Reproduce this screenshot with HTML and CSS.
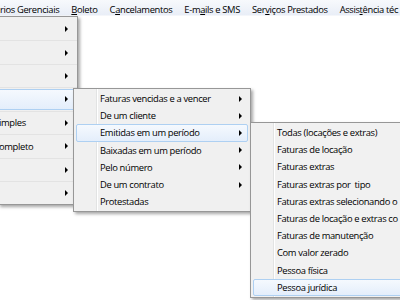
FILE: index.html
```html
<!DOCTYPE html>
<html>
<head>
<meta charset="utf-8">
<link rel="stylesheet" href="styles.css">
</head>
<body>
<div class="screen">
  <div class="menubar">
    <span class="mb-item">rios Gerenciais</span>
    <span class="mb-item"><u>B</u>oleto</span>
    <span class="mb-item">C<u>a</u>ncelamentos</span>
    <span class="mb-item">E-m<u>a</u>ils e SMS</span>
    <span class="mb-item">Ser<u>v</u>iços Prestados</span>
    <span class="mb-item">Assis<u>t</u>ência téc</span>
  </div>

  <div class="menu menu1">
    <div class="row1"><span></span><i class="arrow"></i></div>
    <div class="row1"><span></span><i class="arrow"></i></div>
    <div class="row1"><span></span><i class="arrow"></i></div>
    <div class="row1 hot"><span></span><i class="arrow"></i></div>
    <div class="row1"><span>imples</span><i class="arrow"></i></div>
    <div class="row1"><span>ompleto</span><i class="arrow"></i></div>
    <div class="row1"><span></span><i class="arrow"></i></div>
    <div class="row1"><span></span><i class="arrow"></i></div>
  </div>

  <div class="menu menu2">
    <div class="item"><span>Faturas vencidas e a vencer</span><i class="arrow"></i></div>
    <div class="item"><span>De um cliente</span><i class="arrow"></i></div>
    <div class="item hot"><span>Emitidas em um período</span><i class="arrow"></i></div>
    <div class="item"><span>Baixadas em um período</span><i class="arrow"></i></div>
    <div class="item"><span>Pelo número</span><i class="arrow"></i></div>
    <div class="item"><span>De um contrato</span><i class="arrow"></i></div>
    <div class="item"><span>Protestadas</span></div>
  </div>

  <div class="menu menu3">
    <div class="item"><span>Todas (locações e extras)</span></div>
    <div class="item"><span>Faturas de locação</span></div>
    <div class="item"><span>Faturas extras</span></div>
    <div class="item"><span>Faturas extras por&nbsp; tipo</span></div>
    <div class="item"><span>Faturas extras selecionando o</span></div>
    <div class="item"><span>Faturas de locação e extras co</span></div>
    <div class="item"><span>Faturas de manutenção</span></div>
    <div class="item"><span>Com valor zerado</span></div>
    <div class="item"><span>Pessoa física</span></div>
    <div class="item hot"><span>Pessoa jurídica</span></div>
  </div>
</div>
</body>
</html>
```

FILE: styles.css
```css
html, body {
  margin: 0;
  padding: 0;
  background: #ffffff;
}
.screen {
  position: relative;
  width: 400px;
  height: 300px;
  overflow: hidden;
  font-family: "Open Sans", "Noto Sans", sans-serif;
  font-size: 9.4px;
  letter-spacing: -0.35px;
  color: #000000;
}
.menubar {
  height: 16px;
  display: flex;
  gap: 12px;
  align-items: center;
  white-space: nowrap;
  background: linear-gradient(#f7f9fc, #e9eef7);
  border-bottom: 1px solid #f4f6fa;
  box-sizing: border-box;
  padding-top: 3px;
}
.mb-item u {
  text-decoration-thickness: 1px;
  text-underline-offset: 1px;
}
.menu {
  position: absolute;
  background: #f0f0f0;
  border: 1px solid #979797;
  box-sizing: border-box;
  box-shadow: 2px 2px 3px rgba(0, 0, 0, 0.35);
  white-space: nowrap;
}
.arrow {
  width: 0;
  height: 0;
  border-left: 3px solid #000;
  border-top: 3px solid transparent;
  border-bottom: 3px solid transparent;
}
.menu1 {
  left: -2px;
  top: 16px;
  width: 80px;
  border-left: none;
}
.row1 {
  height: 23.43px;
  box-sizing: border-box;
  display: flex;
  align-items: center;
  justify-content: space-between;
  padding: 0 9px 0 1px;
  border-top: 1px solid #e3e3e3;
  position: relative;
}
.row1:first-child {
  border-top: none;
}
.row1.hot::before {
  content: "";
  position: absolute;
  left: 0;
  right: 2px;
  top: 1px;
  bottom: 1px;
  border: 1px solid #aed0f2;
  border-radius: 2px;
  background: linear-gradient(#f5f9fe, #e4eefb);
}
.row1 > * {
  position: relative;
}
.menu2 {
  left: 73px;
  top: 88px;
  width: 178px;
  padding: 1px 2px;
  background: linear-gradient(90deg, #f0f0f0 22px, #e2e3e3 22px, #e2e3e3 23px, #ffffff 23px, #ffffff 24px, #f0f0f0 24px);
}
.menu3 {
  left: 250px;
  top: 122px;
  width: 200px;
  padding: 1px 2px;
  background: linear-gradient(90deg, #f1f1f1 22px, #e2e3e3 22px, #e2e3e3 23px, #ffffff 23px, #ffffff 24px, #f1f1f1 24px);
}
.item {
  height: 17.2px;
  box-sizing: border-box;
  display: flex;
  align-items: center;
  justify-content: space-between;
  padding: 0 5px 0 23px;
  border: 1px solid transparent;
  border-radius: 2px;
}
.menu3 .item {
  padding-left: 23px;
}
.item.hot {
  border-color: #aed0f2;
  background: linear-gradient(#f5f9fe, #e4eefb);
}
```
